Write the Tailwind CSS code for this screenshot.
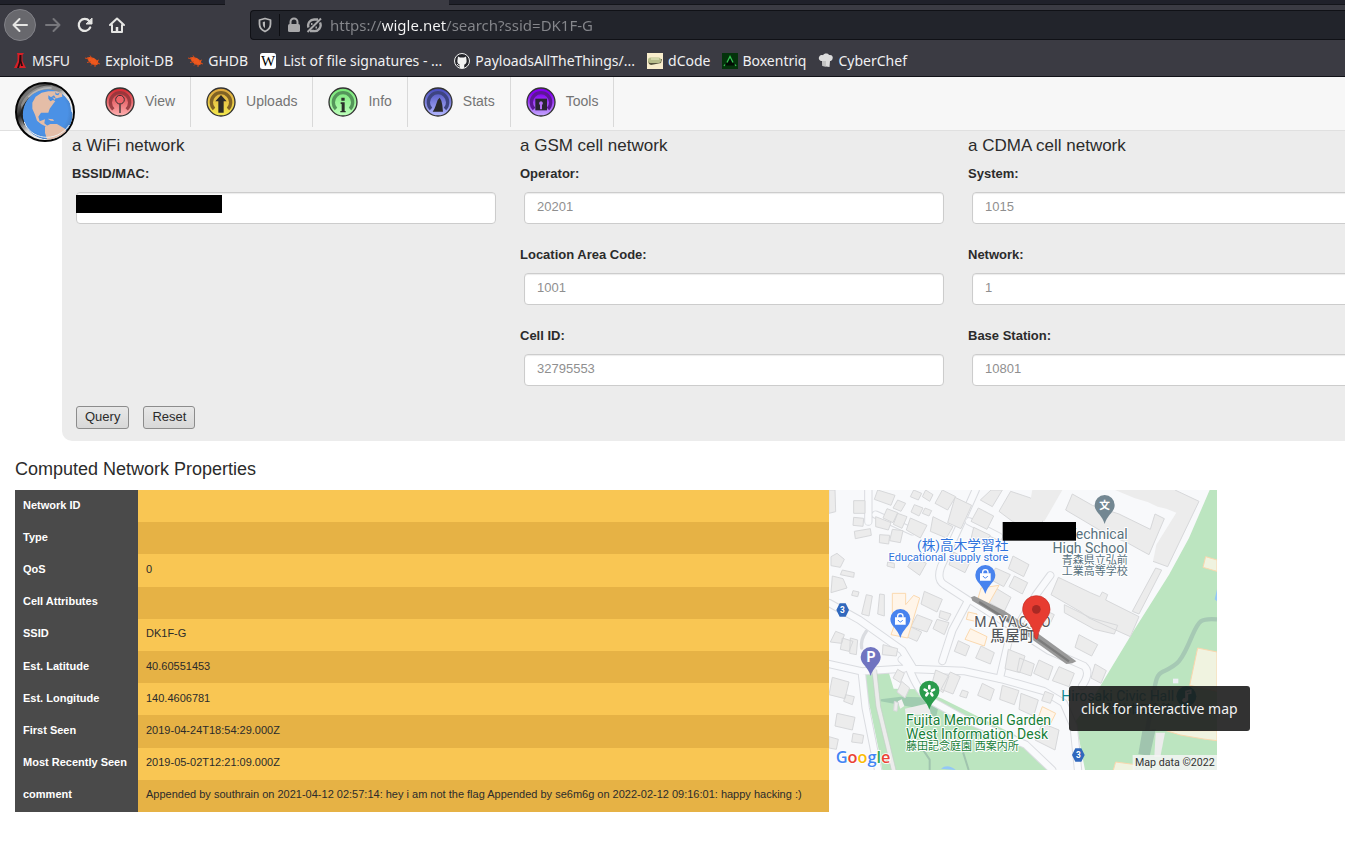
<!DOCTYPE html>
<html lang="en">
<head>
<meta charset="utf-8">
<title>WiGLE: Network Search</title>
<script src="https://cdn.jsdelivr.net/npm/@tailwindcss/browser@4"></script>
</head>
<body class="min-h-screen overflow-x-hidden bg-white font-['Liberation_Sans',Arial,sans-serif] text-[13px] text-[#2b2b2b]">

<!-- Browser chrome -->
<div class="border-b border-[#111218] bg-[#3b3b43] font-['Noto_Sans',sans-serif] text-[#f0f0f2]">
  <div class="flex h-[5px]">
    <div class="w-[225px] border-b border-[#14151a] bg-[#20212a]"></div>
    <div class="w-[224px]"></div>
    <div class="grow border-b border-[#14151a] bg-[#20212a]"></div>
  </div>
  <div class="flex h-10 items-center pl-1">
    <button aria-label="Back" class="flex size-8 items-center justify-center rounded-full border border-[#818187] bg-[#68686d]">
      <svg class="size-4" viewBox="0 0 16 16" fill="none" stroke="#e6e6e4" stroke-width="2" stroke-linecap="round" stroke-linejoin="round"><path d="M15 8H1.500M7.500 2l-6 6 6 6"/></svg>
    </button>
    <button aria-label="Forward" class="ml-[9px] flex size-4 items-center justify-center">
      <svg class="size-4" viewBox="0 0 16 16" fill="none" stroke="#77777c" stroke-width="2" stroke-linecap="round" stroke-linejoin="round"><path d="M1 8h13.500M8.500 2l6 6-6 6"/></svg>
    </button>
    <button aria-label="Reload" class="ml-4 flex size-4 items-center justify-center">
      <svg class="size-4" viewBox="0 0 16 16" fill="none" stroke="#e6e6e4" stroke-width="2.200" stroke-linecap="round"><path d="M13.200 10.500A6 6 0 1 1 12.300 4"/><path d="M15 1.500V7H9.500z" fill="#e6e6e4" stroke-width="1" stroke-linejoin="round"/></svg>
    </button>
    <button aria-label="Home" class="ml-4 flex size-4 items-center justify-center">
      <svg class="size-4" viewBox="0 0 16 16" fill="none" stroke="#e6e6e4" stroke-width="2" stroke-linecap="round" stroke-linejoin="round"><path d="M1 8l7-6.500L15 8M3 8v7h10V8"/><path d="M8 10v4" stroke-width="2.500" stroke-linecap="butt"/></svg>
    </button>
    <div class="ml-[125px] flex h-[30px] grow items-center rounded-l border border-r-0 border-[#101116] bg-[#22242b]">
      <svg class="ml-1.5 size-4" viewBox="0 0 16 16" fill="none" stroke="#b5b5b6" stroke-width="1.800"><path d="M8 1.500L13.500 3v4c0 3.500-2 6-5.500 7.500C4.500 13 2.500 10.500 2.500 7V3z" stroke-linejoin="round"/><path d="M8 4.500L5.800 5v2c0 1.800.8 3.200 2.200 4.200z" fill="#b5b5b6" stroke="none"/></svg>
      <div class="ml-1.5 h-[22px] w-px bg-[#0d0e12]"></div>
      <svg class="ml-1.5 size-4" viewBox="0 0 16 16"><rect x="2" y="7" width="12" height="8" rx="1.500" fill="#a8a8aa"/><path d="M4.500 7V5a3.500 3.500 0 0 1 7 0v2" fill="none" stroke="#a8a8aa" stroke-width="2"/></svg>
      <svg class="ml-1 size-4" viewBox="0 0 16 16" fill="none" stroke="#a8a8aa" stroke-width="2.400"><path d="M12 2.500H8.500A6 6 0 0 0 2.500 10.500M14 5.500A6 6 0 0 1 7.500 14H4"/><path d="M1.500 15L15 1.500" stroke-width="2"/><path d="M5 7h1.500M9.500 10.500h1.500" stroke-width="2"/></svg>
      <input aria-label="Address" value="https://wigle.net/search?ssid=DK1F-G" class="ml-2 h-6 min-w-0 grow bg-[linear-gradient(90deg,#85868b_52px,#f7f7f7_52px,#f7f7f7_116px,#85868b_116px)] bg-clip-text text-[15px] leading-6 text-transparent caret-white outline-none">
    </div>
  </div>
  <nav aria-label="Bookmarks" class="flex h-[31px] items-center gap-3 pl-3 text-[14px] leading-5 whitespace-nowrap">
    <div class="flex items-center gap-[15px]">
    <a href="#" class="flex items-center gap-1"><svg class="size-4" viewBox="0 0 16 16"><path d="M5 0h7l-1.500 2v6l3.500 7H2l3.500-7V2z" fill="#d81f26"/><path d="M7.500 2h2v6l1.500 5H9l-.5-3L7 15H5l2-6z" fill="#270c10"/></svg>MSFU</a>
    <a href="#" class="flex items-center gap-1"><svg class="size-4" viewBox="0 0 16 16"><path d="M2 4.500L5 4l4 1 4 3 .5 3-3 1.500-4-1.500L3.500 8z" fill="#ee581d"/><path d="M0 5l4 1M2 9.500l4-1M5 2.500l2 3M6 12.500l2-2M10 14v-3M15 11l-3-1M14 7l-3 1" stroke="#d24b1b" fill="none"/></svg>Exploit-DB</a>
    <a href="#" class="flex items-center gap-1"><svg class="size-4" viewBox="0 0 16 16"><path d="M2 4.500L5 4l4 1 4 3 .5 3-3 1.500-4-1.500L3.500 8z" fill="#ee581d"/><path d="M0 5l4 1M2 9.500l4-1M5 2.500l2 3M6 12.500l2-2M10 14v-3M15 11l-3-1M14 7l-3 1" stroke="#d24b1b" fill="none"/></svg>GHDB</a>
    </div>
    <a href="#" class="flex items-center gap-[7px]"><svg class="size-4" viewBox="0 0 16 16"><rect width="16" height="16" rx="2.500" fill="#fff"/><text x="8" y="13" text-anchor="middle" font-family="Liberation Serif" font-size="15">W</text></svg>List of file signatures - ...</a>
    <a href="#" class="flex items-center gap-[5px]"><svg class="size-4" viewBox="0 0 16 16"><circle cx="8" cy="8" r="7.500" fill="#24252b" stroke="#f2f2f2"/><path d="M5.800 15v-3.200C3.800 11 3 9.300 3.500 6.800L4 3.500l2 1h4l2-1 .5 3.300c.5 2.500-.5 4.200-2.300 5V15z" fill="#f2f2f2"/><path d="M3 11l1.500 1.700 1.500.2" stroke="#f2f2f2" fill="none"/></svg>PayloadsAllTheThings/...</a>
    <a href="#" class="flex items-center gap-[5px]"><svg class="size-4" viewBox="0 0 16 16"><rect width="16" height="16" fill="#f8edcc"/><path d="M1 8l14-2-1 4-10 2-2-1z" fill="#56543d"/><rect x="1" y="4.500" width="13" height="5.500" rx="2.500" fill="#b7bd8b"/><path d="M4 6h8" stroke="#dadfb3" stroke-width="1.500"/></svg>dCode</a>
    <a href="#" class="flex items-center gap-1"><svg class="size-4" viewBox="0 0 16 16"><rect width="16" height="16" fill="#04330b"/><path d="M8 3.500L3 12.500h10z" fill="#020c04"/><path d="M5 9.500l3-6 3 6M3 11.500l-1 1.500M13 11.500l1 1.500" fill="none" stroke="#35c653" stroke-width="1.300"/></svg>Boxentriq</a>
    <a href="#" class="flex items-center gap-1"><svg class="size-4" viewBox="0 0 16 16"><path d="M4 8C1 8 0 5 1.500 3.200 2.500 2 4 2 5 2.200 6 0 10 0 11 2c3-.5 4.500 1.500 3.500 4-.5 1.500-1.500 2-2.500 2l-.5 6-7-1z" fill="#dcdcdc"/><path d="M4 8l.5 5 3.500.5V8z" fill="#c2c2c2"/></svg>CyberChef</a>
  </nav>
</div>

<!-- Site navigation -->
<header class="relative border-b border-[#e0e0e0] bg-[#f7f7f7] text-[14px] text-[#747474]">
  <a href="#" aria-label="WiGLE home" class="absolute top-[5px] left-[15px]">
    <svg class="size-[60px]" viewBox="0 0 180 180">
      <defs>
        <linearGradient id="rim" x1="0" y1=".2" x2=".7" y2=".9"><stop offset="0" stop-color="#292929"/><stop offset=".12" stop-color="#777"/><stop offset=".3" stop-color="#222"/><stop offset=".6" stop-color="#ddd"/><stop offset="1" stop-color="#fff"/></linearGradient>
        <radialGradient id="sea" cx=".45" cy=".45" r=".6"><stop offset=".75" stop-color="#4b91e5"/><stop offset="1" stop-color="#427bc0"/></radialGradient>
        <clipPath id="ball"><circle cx="98" cy="97" r="75"/></clipPath>
      </defs>
      <circle cx="90" cy="90" r="87" fill="url(#rim)" stroke="#050505" stroke-width="6"/>
      <path d="M18 68C34 30 66 10 110 10l36 16-65 3-36 36-18 60z" fill="#8d8d8d"/><path d="M16 100C18 58 62 20 115 24l-37 14-50 92z" fill="#222"/><path d="M40 45Q70 16 110 18" fill="none" stroke="#b5b5b5" stroke-width="5"/>
      <g clip-path="url(#ball)"><circle cx="98" cy="97" r="75" fill="url(#sea)"/>
      <g fill="#e4bda7"><path d="M62 44l18-12 20-4h40l2 16-14 4-12 16-12 16-4 12H78l-8 12 4 14 16-6-2 12 10 8-4 2-16-8-12-10-6-18-8-18V62z"/><path d="M90 134l16-8h20l24 14 4 8-12 16-16 14-20 4-10-10-6-20z"/><path d="M98 110l16 2 3 5-10-1z"/></g>
      <path d="M100 40l8 6 9-6 5 8 10 3-6 9-12-6-8 4-6-8zM120 30l6 5 8-3-4 8-8-2z" fill="#4b91e5"/><path d="M112 46l10 3-3 5z" fill="#e4bda7"/></g>
      <path d="M28 120C45 171 122 187 163 129M166 62l5 28" fill="none" stroke="#eee" stroke-width="3"/>
    </svg>
  </a>
  <nav aria-label="Main" class="flex pb-[3px] pl-[90px]">
    <a href="#" class="flex h-[50px] items-center gap-2.5 border-r border-[#d9d9d9] px-[15px]">
      <svg class="size-[30px]" viewBox="0 0 90 90"><defs><linearGradient id="g1" x2="0" y2="1"><stop stop-color="#d4252e"/><stop offset="1" stop-color="#ffb2b2"/></linearGradient></defs><circle cx="45" cy="45" r="42" fill="url(#g1)" stroke="#333" stroke-width="4"/><path d="M25 67a29 29 0 1 1 40 0" fill="none" stroke="#8e353a" stroke-opacity=".85" stroke-width="10"/><circle cx="45" cy="38" r="13" fill="#ef6369" stroke="#333" stroke-width="3"/><path d="M45 52v26" stroke="#333" stroke-width="4"/></svg><span class="-mt-0.5">View</span></a>
    <a href="#" class="flex h-[50px] items-center gap-2.5 border-r border-[#d9d9d9] px-[15px]">
      <svg class="size-[30px]" viewBox="0 0 90 90"><defs><linearGradient id="g2" x2="0" y2="1"><stop stop-color="#dca43d"/><stop offset="1" stop-color="#f4e94e"/></linearGradient></defs><circle cx="45" cy="45" r="42" fill="url(#g2)" stroke="#333" stroke-width="4"/><path d="M24 66a29 29 0 1 1 42 0" fill="none" stroke="#806225" stroke-width="10"/><path d="M45 24L28 43h9v34h16V43h9z" fill="#2d2b29"/></svg><span class="-mt-0.5">Uploads</span></a>
    <a href="#" class="flex h-[50px] items-center gap-2.5 border-r border-[#d9d9d9] px-[15px]">
      <svg class="size-[30px]" viewBox="0 0 90 90"><defs><linearGradient id="g3" x2="0" y2="1"><stop stop-color="#74e674"/><stop offset="1" stop-color="#beffbb"/></linearGradient></defs><circle cx="45" cy="45" r="42" fill="url(#g3)" stroke="#333" stroke-width="4"/><path d="M24 66a29 29 0 1 1 42 0" fill="none" stroke="#54955a" stroke-width="10"/><path d="M40 32h10v9H40zM38 46h12v26h3v4H37v-4h4V51h-3z" fill="#2b302b"/></svg><span class="-mt-0.5">Info</span></a>
    <a href="#" class="flex h-[50px] items-center gap-2.5 border-r border-[#d9d9d9] px-[15px]">
      <svg class="size-[30px]" viewBox="0 0 90 90"><defs><linearGradient id="g4" x2="0" y2="1"><stop stop-color="#4448b9"/><stop offset="1" stop-color="#b4b8ff"/></linearGradient></defs><circle cx="45" cy="45" r="42" fill="url(#g4)" stroke="#333" stroke-width="4"/><path d="M24 66a29 29 0 1 1 42 0" fill="none" stroke="#3e4480" stroke-width="10"/><path d="M29 74l5-8 4-10 6-17 6-7 5 9 3 14 2 19z" fill="#292929"/></svg><span class="-mt-0.5">Stats</span></a>
    <a href="#" class="flex h-[50px] items-center gap-2.5 border-r border-[#d9d9d9] px-[15px]">
      <svg class="size-[30px]" viewBox="0 0 90 90"><defs><linearGradient id="g5" x2="0" y2="1"><stop offset=".2" stop-color="#8400ef"/><stop offset="1" stop-color="#c5aaff"/></linearGradient></defs><circle cx="45" cy="45" r="42" fill="url(#g5)" stroke="#333" stroke-width="4"/><path d="M24 66a29 29 0 1 1 42 0" fill="none" stroke="#5c1695" stroke-width="10"/><path d="M28 35h35v35H28z" fill="#292432"/><path d="M45 43a6 6 0 0 1 3 11v13h-6V54a6 6 0 0 1 3-11z" fill="#b470f5"/></svg><span class="-mt-0.5">Tools</span></a>
  </nav>
</header>

<!-- Search form: three fixed-width columns that run past a narrow window -->
<form class="ml-[62px] overflow-hidden rounded-bl-[10px] bg-[#ececec] pb-3">
  <div class="grid grid-cols-[repeat(3,448px)] pt-px">
    <section class="pr-[14px] pl-2.5">
      <h4 class="mb-1 text-[17px] leading-7">a WiFi network</h4>
      <div class="mb-5">
        <label for="mac" class="mb-2 block leading-5 font-bold">BSSID/MAC:</label>
        <div class="relative ml-1">
          <input id="mac" class="block h-8 w-full rounded border border-[#ccc] bg-white px-3 shadow-[inset_0_1px_1px_rgba(0,0,0,0.08)]">
          <div class="absolute top-[3px] left-0 h-[18px] w-[146px] bg-black"></div>
        </div>
      </div>
    </section>
    <section class="pr-[14px] pl-2.5">
      <h4 class="mb-1 text-[17px] leading-7">a GSM cell network</h4>
      <div class="mb-[21px]"><label for="op" class="mb-2 block leading-5 font-bold">Operator:</label>
        <div class="ml-1"><input id="op" placeholder="20201" class="block h-8 w-full rounded border border-[#ccc] bg-white px-3 pb-[3px] shadow-[inset_0_1px_1px_rgba(0,0,0,0.08)] placeholder:text-[#8f8f8f]"></div></div>
      <div class="mb-[21px]"><label for="lac" class="mb-2 block leading-5 font-bold">Location Area Code:</label>
        <div class="ml-1"><input id="lac" placeholder="1001" class="block h-8 w-full rounded border border-[#ccc] bg-white px-3 pb-[3px] shadow-[inset_0_1px_1px_rgba(0,0,0,0.08)] placeholder:text-[#8f8f8f]"></div></div>
      <div class="mb-5"><label for="cell" class="mb-2 block leading-5 font-bold">Cell ID:</label>
        <div class="ml-1"><input id="cell" placeholder="32795553" class="block h-8 w-full rounded border border-[#ccc] bg-white px-3 pb-[3px] shadow-[inset_0_1px_1px_rgba(0,0,0,0.08)] placeholder:text-[#8f8f8f]"></div></div>
    </section>
    <section class="pr-[14px] pl-2.5">
      <h4 class="mb-1 text-[17px] leading-7">a CDMA cell network</h4>
      <div class="mb-[21px]"><label for="sys" class="mb-2 block leading-5 font-bold">System:</label>
        <div class="ml-1"><input id="sys" placeholder="1015" class="block h-8 w-full rounded border border-[#ccc] bg-white px-3 pb-[3px] shadow-[inset_0_1px_1px_rgba(0,0,0,0.08)] placeholder:text-[#8f8f8f]"></div></div>
      <div class="mb-[21px]"><label for="net" class="mb-2 block leading-5 font-bold">Network:</label>
        <div class="ml-1"><input id="net" placeholder="1" class="block h-8 w-full rounded border border-[#ccc] bg-white px-3 pb-[3px] shadow-[inset_0_1px_1px_rgba(0,0,0,0.08)] placeholder:text-[#8f8f8f]"></div></div>
      <div class="mb-5"><label for="bs" class="mb-2 block leading-5 font-bold">Base Station:</label>
        <div class="ml-1"><input id="bs" placeholder="10801" class="block h-8 w-full rounded border border-[#ccc] bg-white px-3 pb-[3px] shadow-[inset_0_1px_1px_rgba(0,0,0,0.08)] placeholder:text-[#8f8f8f]"></div></div>
    </section>
  </div>
  <div class="flex gap-3.5 pl-[14px]">
    <button type="button" class="h-[23px] rounded-[3px] border border-[#8c8c8c] bg-linear-to-b from-[#e8e8e8] to-[#d8d8d8] px-2 pb-0.5">Query</button>
    <button type="reset" class="h-[23px] rounded-[3px] border border-[#8c8c8c] bg-linear-to-b from-[#e8e8e8] to-[#d8d8d8] px-2 pb-0.5">Reset</button>
  </div>
</form>

<main class="px-[15px] pt-[18px] pb-[30px]">
  <h4 class="mb-[11px] text-[18px] leading-5">Computed Network Properties</h4>
  <div class="flex items-start">
    <table class="h-[322px] w-[814px] border-collapse text-left text-[11px] leading-4">
      <tbody>
        <tr class="bg-[#f9c653]"><th scope="row" class="w-[123px] bg-[#4a4a4a] px-2 pb-[3px] whitespace-nowrap text-white">Network ID</th><td class="px-2 pb-[3px]"></td></tr>
        <tr class="bg-[#e6b245]"><th scope="row" class="bg-[#4a4a4a] px-2 pb-[3px] text-white">Type</th><td class="px-2 pb-[3px]"></td></tr>
        <tr class="bg-[#f9c653]"><th scope="row" class="bg-[#4a4a4a] px-2 pb-[3px] text-white">QoS</th><td class="px-2 pb-[3px]">0</td></tr>
        <tr class="bg-[#e6b245]"><th scope="row" class="bg-[#4a4a4a] px-2 pb-[3px] text-white">Cell Attributes</th><td class="px-2 pb-[3px]"></td></tr>
        <tr class="bg-[#f9c653]"><th scope="row" class="bg-[#4a4a4a] px-2 pb-[3px] text-white">SSID</th><td class="px-2 pb-[3px]">DK1F-G</td></tr>
        <tr class="bg-[#e6b245]"><th scope="row" class="bg-[#4a4a4a] px-2 pb-[3px] text-white">Est. Latitude</th><td class="px-2 pb-[3px]">40.60551453</td></tr>
        <tr class="bg-[#f9c653]"><th scope="row" class="bg-[#4a4a4a] px-2 pb-[3px] text-white">Est. Longitude</th><td class="px-2 pb-[3px]">140.4606781</td></tr>
        <tr class="bg-[#e6b245]"><th scope="row" class="bg-[#4a4a4a] px-2 pb-[3px] text-white">First Seen</th><td class="px-2 pb-[3px]">2019-04-24T18:54:29.000Z</td></tr>
        <tr class="bg-[#f9c653]"><th scope="row" class="bg-[#4a4a4a] px-2 pb-[3px] whitespace-nowrap text-white">Most Recently Seen</th><td class="px-2 pb-[3px]">2019-05-02T12:21:09.000Z</td></tr>
        <tr class="bg-[#e6b245]"><th scope="row" class="bg-[#4a4a4a] px-2 pb-[3px] text-white">comment</th><td class="px-2 pb-[3px] whitespace-nowrap">Appended by southrain on 2021-04-12 02:57:14: hey i am not the flag Appended by se6m6g on 2022-02-12 09:16:01: happy hacking :)</td></tr>
      </tbody>
    </table>
    <a href="#" class="relative block shrink-0">
      <svg class="h-[280px] w-[388px]" viewBox="0 6 1164 840" role="img" aria-label="Map of the network location" font-family="Roboto, 'Noto Sans CJK JP', sans-serif">
        <rect y="6" width="1164" height="840" fill="#f8f9fb"/>
        <!-- parks -->
        <path d="M1142 6h22v840H768L740 700 798 620 915 427 1020 260 1080 150z" fill="#bce5c0"/>
        <path d="M108 546l68-4 18 60 76 2 70 28 220 110 105 104H160L150 790 115 620z" fill="#bce5c0"/>
        <path d="M155 634l60-8 60 2 54 26-8 34-40-20-30-10-40-8-56-10z" fill="#a0ccb0"/>
        <path d="M228 662l70-16 8 34h-76z" fill="#ececec"/>
        <path d="M206 640l12-6 8 20-12 8z" fill="#f2f2f2"/>
        <g fill="none" stroke="#a0c4ae" stroke-width="6"><path d="M262 755l40 60v31M395 770l24 76M430 740l130 8"/></g>
        <path d="M1164 394c-50-4-54 4-74 48-34 82-44 88-86 108-24 10-24 30-34 90l-16 90" fill="none" stroke="#a6c9b4" stroke-width="13"/>
        <path d="M940 728l40-4-18 80-34-6z" fill="#a0c4ae"/><path d="M980 734h28l-14 72h-18z" fill="#ececec"/>
        <g fill="#f0f3e0" stroke="#fad7ae" stroke-width="3"><path d="M1106 480l58 12v118l-82-18zM1130 206l34 10v34l-42-12zM1012 728h152v30l-40-5-70-12zM860 822l60 8-4 20h-64z"/></g>
        <path d="M336 842q20-16 44 4zM1164 304l-7 30 7 6z" fill="#93c7f7"/>
        <rect x="1032" y="572" width="16" height="14" fill="#eef0f5"/>
        <!-- streets: wide casing under a lighter fill -->
        <defs><g id="streets"><path d="M0 345l90 50 130 92 34 56 150 6 120 26 120 34 60 36 30 70 14 140"/><path d="M0 528l98 22 126-8q20-6-6-28M98 550l12 110 38 190"/><path d="M118 6v95M140 80l110 50"/><path d="M440 6l-40 90-64 140q-14 40 10 54l72 47-48 90-30 92"/><path d="M430 340l230 148 105 46q22 20-6 60M664 262l-44 60-82 140-26 110M420 100l90 46M240 540q30 80 70 100l90 50 190 80 80 76"/></g></defs>
        <g fill="none" stroke-linejoin="round" stroke-linecap="round">
          <use href="#streets" stroke="#dadce0" stroke-width="25"/>
          <use href="#streets" stroke="#f9fafc" stroke-width="19"/>
          <path d="M136 546l12 110 46 190" stroke="#ececec" stroke-width="13"/><path d="M129 546l12 110 46 190M143 546l12 110 46 190" stroke="#c5cfc8" stroke-width="2"/>
          <path d="M112 430q-18 25-14 50" stroke="#dadce0" stroke-width="10"/>
        </g>
        <!-- buildings -->
        <g fill="#ececec" stroke="#d7d8da" stroke-width="3">
          <path d="M0 6h18l2 65-20 5zM74 38h34v38H74zM74 88l30 3-2 24-30-3zM76 130l48-8 3 20-48 10zM152 140l30 2-3 26-28-4zM190 124l32 4-8 36-32-6z"/>
          <path d="M146 6l52 16-12 30-50-18zM206 36l24 10-14 24-24-10zM174 62l32 12-14 30-30-14zM140 86l46 18-8 22-38-10zM206 76l28 10-15 35-26-12zM244 90l50 22-20 38-42-24zM256 50l26 10-12 24-24-12zM254 6l24 10-10 20-24-10zM288 60l20 8-8 16-20-8zM290 6l22 14-10 20-22-14zM340 6l40 20-24 40-38-20zM378 28l50 24-32 70-40-18zM312 86l60 30-20 34-48-20z"/>
          <path d="M486 6h34l-30 50-36-20zM545 10l60 20 40 56-15 50-80-36-40-30zM448 60l46 24-20 40-48-24zM434 118l50 24-18 26-40-16z"/>
          <path d="M610 6h90l-54 94-26-10-20-30z" stroke="none"/>
          <path d="M730 18l60 34 80 26 94 46 14-46 28 14-46 108-26-14-36-20-80-36-108-64z"/>
          <path d="M858 6h180l72 34-94 196-44-16 10-50 60-96-30-12-26-6-30-14-40-12-58-24z" stroke="none"/><path d="M1038 6l72 34-94 196-44-16" fill="none"/>
          <path d="M688 268l96 46 28 12 8-14 16 8-6 16 100 50-26 60-124-56-24-18-90-52zM980 240l18 6-68 132-20-8zM706 350l80 40 80 22-10 26-60-14-90-50z"/>
          <path d="M6 206l18-10 22 18-12 24-28-5zM40 246l36 8-2 14-40-8zM10 264l32 8 12 28-48 14zM72 308l18 4-4 14-18-4zM112 320l18 4-10 60-22-6zM152 318l14 2v64l-20-6zM286 310l54 24-16 38-48-24zM264 380l46 18-16 34-48-16zM244 416l34 16-14 28-32-14zM334 368l32 10-10 20-26-10zM324 394l36 10-14 36-34-18z"/>
          <path d="M374 192l50 28-16 34-48-24zM254 206l38 20-20 36-36-26zM176 222l20 4v14l-22-6zM552 204l48 26-16 36-46-24zM500 240l44 20-20 36-44-24zM556 264l40 20-16 34-40-22zM500 300l46 28-20 42-48-28zM634 360l42 20-16 34-38-20z"/>
          <path d="M20 430l26 10-8 26-34-4zM40 450l32 10-12 30-26-6zM64 450l22 6-4 44-20-4zM162 470l44 12-4 22-42-4zM388 458l34 16-12 30-34-14zM456 474l40 20-12 34-44-18zM538 484l50 20-16 50-44-12zM572 510l44 18-10 36-42-14zM630 516l42 20-14 40-44-20zM690 536l46 20-16 40-50-18zM798 528l34 20-16 38-30-16zM750 440l56 30-18 34-50-26z"/>
          <path d="M206 544l20 12-12 28-22-14zM218 580l24 20-14 30-24-18zM320 546l40 18-18 50-34-24zM364 552l30 14-22 52-36-14zM400 606l18 6-6 18-20-6zM460 586l36 18-12 34-38-16zM520 592l50 16-14 42-44-16zM576 616l52 20-14 48-44-20zM648 610l26 10-10 26-26-8zM640 706l50 20-12 60-60-30z"/>
          <path d="M10 568l50 14-12 50-48-12zM50 620l26 6-6 24-26-10zM24 676l54 12-8 38-52-12zM72 736l32 6-4 24-32-4zM0 746l28 8-6 30-22-4zM196 640l12 4-4 26-10-2z"/>
        </g>
        <g fill="#fff5e9" stroke="#fbd9af" stroke-width="3"><path d="M190 316h40v34l24-28 18 8-36 120-50-10 18-50-14-12zM456 300l54-8-36 64-30-14zM418 372l26 6-4 22-28-6zM424 422l50 24-8 28-58-20zM640 656l40 20-16 32-36-20z"/></g>
        <!-- shaded building line through the marker -->
        <path d="M426 328l10-4 90 44 98 66 118 86-12 6-18 2-112-80-80-56-90-54z" fill="#999"/><path d="M450 342l160 100 110 78" fill="none" stroke="#7c7c7c" stroke-width="7"/>
        <!-- route shields -->
        <g fill="#3068bd"><path d="M32 346h18l10 20-10 20H32l-10-20zM739 781h18l10 20-10 20h-18l-10-20z"/></g>
        <g fill="#fff" font-size="25" font-weight="700" text-anchor="middle"><text x="40" y="375">3</text><text x="748" y="810">3</text></g>
        <!-- pins -->
        <g>
          <path d="M469 231a30 30 0 0 1 30 30c0 22-22 28-30 57-8-29-30-35-30-57a30 30 0 0 1 30-30z" fill="#4883ee"/>
          <path d="M214 363a30 30 0 0 1 30 30c0 22-22 28-30 57-8-29-30-35-30-57a30 30 0 0 1 30-30z" fill="#4883ee"/>
          <path d="M125 477a30 30 0 0 1 30 30c0 22-22 28-30 57-8-29-30-35-30-57a30 30 0 0 1 30-30z" fill="#7074c0"/>
          <path d="M301 578a30 30 0 0 1 30 30c0 22-22 28-30 57-8-29-30-35-30-57a30 30 0 0 1 30-30z" fill="#2a9b4c"/>
          <path d="M827 21a30 30 0 0 1 30 30c0 22-22 28-30 57-8-29-30-35-30-57a30 30 0 0 1 30-30z" fill="#738792"/>
          <g fill="#fff"><path d="M453 256h32v22h-32zM198 388h32v22h-32z"/></g>
          <g fill="none" stroke="#fff" stroke-width="4"><path d="M461 257v-4a8 8 0 0 1 16 0v4M206 389v-4a8 8 0 0 1 16 0v4"/></g>
          <g fill="none" stroke="#4883ee" stroke-width="3"><path d="M462 264q7 12 14 0M207 396q7 12 14 0"/></g>
          <g stroke="#fff" stroke-width="8" stroke-linecap="round"><path d="M301 601v-7M309 608l6-3M306 616l4 6M296 616l-4 6M293 608l-6-3"/></g>
          <text x="126" y="522" font-size="42" font-weight="700" fill="#fff" text-anchor="middle">P</text>
          <text x="827" y="64" font-size="32" font-weight="700" fill="#fff" text-anchor="middle">文</text>
        </g>
        <!-- labels -->
        <g paint-order="stroke" stroke="#fff" stroke-width="6" stroke-linejoin="round">
          <g fill="#3073dc"><text x="538" y="186" font-size="41" text-anchor="end">(株)高木学習社</text><text x="538" y="218" font-size="33" text-anchor="end">Educational supply store</text></g>
          <g fill="#57717d" text-anchor="end"><text x="896" y="153" font-size="42">Technical</text><text x="896" y="195" font-size="42">High School</text><text x="896" y="227" font-size="33">青森県立弘前</text><text x="896" y="260" font-size="33">工業高等学校</text></g>
          <g fill="#55585c"><text x="436" y="417" font-size="42" letter-spacing="5">MAYACHO</text><text x="484" y="458" font-size="44" font-weight="500">馬屋町</text></g>
          <g fill="#188038"><text x="231" y="711" font-size="42">Fujita Memorial Garden</text><text x="231" y="753" font-size="42">West Information Desk</text><text x="231" y="785" font-size="33">藤田記念庭園 西案内所</text></g>
        </g>
        <g fill="#128a91"><text x="697" y="640" font-size="42">Hirosaki Civic Hall</text><text x="830" y="676" font-size="33">弘前市民会館</text></g>
        <circle cx="1072" cy="625" r="30" fill="#128a91"/><path d="M1054 644l18 35 18-35z" fill="#128a91"/><path d="M1071 638v-28l14-3v8l-10 2v21" fill="none" stroke="#fff" stroke-width="5"/><circle cx="1067" cy="637" r="7" fill="#fff"/>
        <!-- result marker -->
        <path d="M622 323a40 40 0 0 1 41 41c0 28-32 40-37 86q-4 8-8 0c-5-46-37-58-37-86a40 40 0 0 1 41-41z" fill="#e73c31" stroke="#c52c25" stroke-width="2"/><circle cx="622" cy="364" r="13" fill="#a92924"/>
        <rect x="521" y="102" width="220" height="56" fill="#000"/>
        <text x="20" y="824" font-family="Open Sans, sans-serif" font-size="49" font-weight="600" paint-order="stroke" stroke="#fff" stroke-width="5"><tspan fill="#4285f4">G</tspan><tspan fill="#ea4335">o</tspan><tspan fill="#fbbc05">o</tspan><tspan fill="#4285f4">g</tspan><tspan fill="#34a853">l</tspan><tspan fill="#ea4335">e</tspan></text>
        <rect x="911" y="801" width="253" height="45" fill="#f3f5f3" fill-opacity=".85"/>
        <text x="918" y="833" font-size="32" fill="#333">Map data ©2022</text>
      </svg>
      <span role="tooltip" class="absolute top-[196px] left-[240px] rounded-[3px] bg-[#1c1c1c]/90 px-3 py-3 font-['Noto_Sans',sans-serif] text-[14px] leading-[21px] whitespace-nowrap text-[#f2f2f2]">click for interactive map</span>
    </a>
  </div>
</main>
</body>
</html>
